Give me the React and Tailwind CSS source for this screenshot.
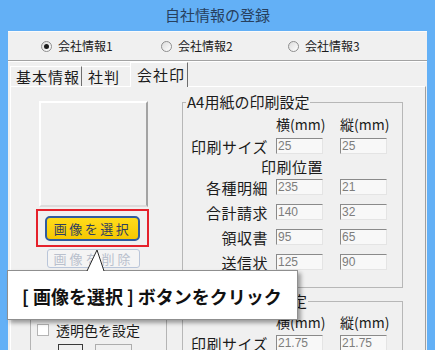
import React from "react";

const Radio = ({ checked, label, className }) => (
  <div className={`flex items-center gap-[6px] ${className}`}>
    <div className="w-[11px] h-[11px] rounded-full border border-[#8e8e8e] bg-gradient-to-br from-[#dcdcdc] to-white flex items-center justify-center">
      {checked && <div className="w-[5px] h-[5px] rounded-full bg-[#1c1c1c]" />}
    </div>
    <span>{label}</span>
  </div>
);

const Field = ({ value }) => (
  <div className="w-[47px] h-[16px] border border-[#e4e4e4] border-t-[#8a8a8a] border-l-[#8a8a8a] bg-[#f8f8f8] text-[12px] leading-[14px] text-[#7d7d7d] pl-[1px] font-['Liberation_Sans',sans-serif]">
    {value}
  </div>
);

const Row = ({ label, a, b }) => (
  <div className="h-[20px] flex items-center">
    <div className="w-[85px] text-right text-[15px] tracking-[0.5px] leading-none">{label}</div>
    <div className="ml-[8px]">
      <Field value={a} />
    </div>
    <div className="ml-[17px]">
      <Field value={b} />
    </div>
  </div>
);

const Header = ({ h }) => (
  <div className={`flex items-center ${h}`}>
    <div className="w-[47px] ml-[93px] text-center text-[14px] leading-none whitespace-nowrap">横(mm)</div>
    <div className="w-[47px] ml-[17px] text-center text-[14px] leading-none whitespace-nowrap">縦(mm)</div>
  </div>
);

export default function App() {
  return (
    <div className="relative w-[435px] h-[350px] overflow-hidden bg-[#63b0f6] font-['Noto_Sans_CJK_JP',sans-serif] text-[#1b1b1b] flex flex-col">
      <div className="h-[31px] shrink-0 flex items-center justify-center text-[15px] text-[#27405e] pb-[1px]">
        自社情報の登録
      </div>

      <div className="flex-1 min-h-0 mx-[8px] bg-[#f0f0f0] border-t border-[#fbfbfb] flex flex-col">
        {/* company selector */}
        <div className="h-[29px] shrink-0 flex items-center pl-[33px] text-[12px] border-b border-[#a3a3a3]">
          <Radio checked label="会社情報1" className="w-[120px]" />
          <Radio label="会社情報2" className="w-[127px]" />
          <Radio label="会社情報3" />
        </div>
        <div className="h-px bg-white shrink-0" />

        {/* tabs */}
        <div className="h-[24px] shrink-0 flex items-end pl-[2px] text-[15px] tracking-[1px]">
          <div className="h-[20px] w-[72px] border-t border-l border-white border-r border-r-[#6e6e6e] flex items-center pl-[5px] leading-none">
            基本情報
          </div>
          <div className="h-[20px] w-[48px] border-t border-white flex items-center pl-[6px] leading-none">
            社判
          </div>
          <div className="relative z-10 -mb-px h-[25px] w-[58px] bg-[#f0f0f0] border-t border-l border-white border-r border-r-[#6e6e6e] flex items-center pl-[6px] pb-[2px] leading-none">
            会社印
          </div>
        </div>

        {/* tab panel */}
        <div className="flex-1 min-h-0 ml-[2px] mr-[1px] border-t border-l border-white border-r border-r-[#a0a0a0] flex items-start">
          {/* left column */}
          <div className="w-[171px] shrink-0 flex flex-col items-start">
            <div className="mt-[14px] ml-[28px] w-[109px] h-[106px] border-2 border-white border-r-[#a3a3a3] border-b-[#dcdcdc]" />
            <div className="mt-[2px] ml-[25px] w-[113px] h-[38px] border-2 border-[#e5212b] pl-[7px] pt-[5px]">
              <div className="w-[95px] h-[25px] rounded-[5px] border-2 border-[#2f5b9f] bg-gradient-to-b from-[#ffdc1a] to-[#f6c800] flex items-center justify-center text-[13px] tracking-[2.5px] text-[#2f3d5f] leading-none">
                画像を選択
              </div>
            </div>
            <div className="mt-[2px] ml-[36px] w-[93px] h-[19px] rounded-[3px] border border-[#b9c5d9] bg-[#f4f4f4] flex items-center justify-center text-[13px] tracking-[3px] text-[#b9c0cd] leading-none">
              画像を削除
            </div>
            <div className="mt-[9px] ml-[19px] w-[137px] h-[80px] border border-[#b4b4b4]">
              <div className="mt-[45px] ml-[6px] flex items-center gap-[7px]">
                <div className="w-[12px] h-[12px] border border-[#b4b4b4] bg-white" />
                <span className="text-[14px] leading-none">透明色を設定</span>
              </div>
              <div className="mt-[7px] flex">
                <div className="ml-[27px] w-[25px] h-[12px] border border-[#3a3a3a] bg-[#f0f0f0]" />
                <div className="ml-[12px] w-[37px] h-[12px] border border-[#adadad] bg-[#f0f0f0]" />
              </div>
            </div>
          </div>

          {/* right column */}
          <div className="flex flex-col">
            <fieldset className="mt-[5px] w-[221px] border border-[#b7b7b7] pb-[15px]">
              <legend className="ml-[3px] px-[1px] text-[15px] leading-[20px]">A4用紙の印刷設定</legend>
              <Header h="h-[24px]" />
              <Row label="印刷サイズ" a="25" b="25" />
              <div className="h-[21px] flex items-center">
                <div className="w-[140px] text-right text-[15px] tracking-[0.5px] leading-none">印刷位置</div>
              </div>
              <div className="flex flex-col gap-[5px]">
                <Row label="各種明細" a="235" b="21" />
                <Row label="合計請求" a="140" b="32" />
                <Row label="領収書" a="95" b="65" />
                <Row label="送信状" a="125" b="90" />
              </div>
            </fieldset>
            <fieldset className="mt-[3px] w-[221px] border border-[#b7b7b7] pb-[15px]">
              <legend className="ml-[3px] px-[1px] text-[15px] leading-[20px]">ハガキの印刷設定</legend>
              <Header h="h-[22px]" />
              <Row label="印刷サイズ" a="21.75" b="21.75" />
            </fieldset>
          </div>
        </div>
      </div>

      {/* callout */}
      <div className="absolute left-[7px] top-[270px] w-[291px] h-[50px] bg-white border border-[#8f8f8f] shadow-[3px_3px_4px_rgba(0,0,0,0.35)] flex items-center pl-[14px] pt-[2px] text-[18px] font-bold text-[#111] whitespace-nowrap">
        [ 画像を選択 ] ボタンをクリック
      </div>
      <svg className="absolute left-[85px] top-[249px]" width="24" height="24" viewBox="0 0 24 24">
        <polygon points="12,1 2,22.5 19,22.5" fill="white" />
        <polyline points="2,22 12,1 19,22" fill="none" stroke="#2a2a2a" strokeWidth="1" />
      </svg>
    </div>
  );
}
